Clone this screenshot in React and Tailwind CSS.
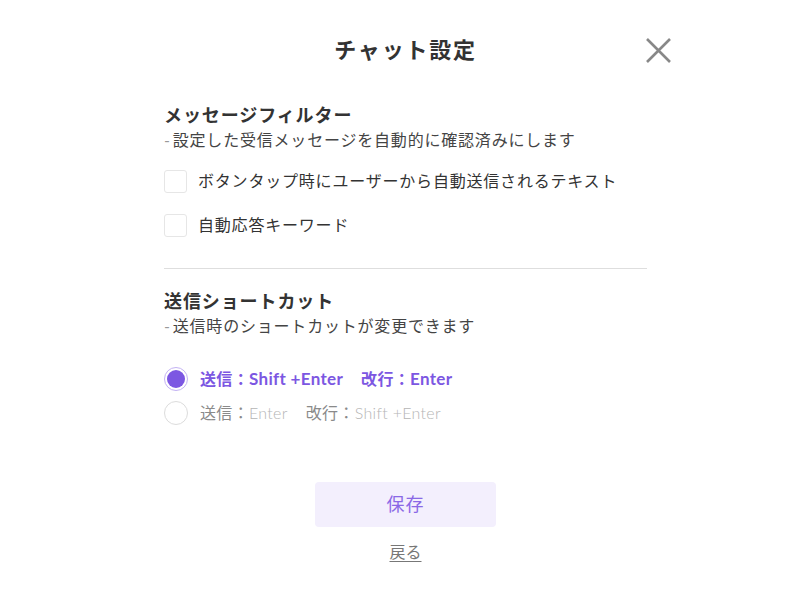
import React from "react";

const font = { fontFamily: "Lato, 'Noto Sans CJK JP', sans-serif" };

export default function App() {
  return (
    <div className="w-[800px] h-[600px] bg-white text-[#333] overflow-hidden" style={font}>
      <div className="relative pt-[35px]">
        <h1 className="ml-[164px] w-[483px] text-center text-[22px] leading-[30px] font-bold tracking-[0.08em] text-[#333]">
          チャット設定
        </h1>
        <button className="absolute left-[645px] top-[37px] w-[27px] h-[27px] text-[#888]">
          <svg viewBox="0 0 27 27" width="27" height="27" fill="none" stroke="currentColor" strokeWidth="2.6" strokeLinecap="butt">
            <path d="M2 2 L25 25 M25 2 L2 25" />
          </svg>
        </button>
      </div>

      <div className="ml-[164px] w-[483px]">
        <h2 className="mt-[37px] text-[18px] leading-[26px] font-bold tracking-[0.05em] text-[#333]">
          メッセージフィルター
        </h2>
        <p className="text-[16px] leading-[24px] tracking-[0.05em] text-[#444]">
          <span className="text-[#999] mr-[2px]">-</span>設定した受信メッセージを自動的に確認済みにします
        </p>

        <div className="mt-[17px] flex flex-col gap-[20px]">
          {["ボタンタップ時にユーザーから自動送信されるテキスト", "自動応答キーワード"].map((t) => (
            <label key={t} className="flex items-center h-[24px]">
              <span className="w-[23px] h-[23px] rounded-[3px] border border-[#e6e6e6] bg-white" />
              <span className="ml-[11px] text-[16px] leading-[24px] tracking-[0.05em] text-[#333]">{t}</span>
            </label>
          ))}
        </div>

        <div className="mt-[31px] h-px bg-[#dedede]" />

        <h2 className="mt-[19px] text-[18px] leading-[26px] font-bold tracking-[0.05em] text-[#333]">
          送信ショートカット
        </h2>
        <p className="text-[16px] leading-[24px] tracking-[0.05em] text-[#444]">
          <span className="text-[#999] mr-[2px]">-</span>送信時のショートカットが変更できます
        </p>

        <div className="mt-[29px] flex flex-col gap-[10px]">
          <label className="flex items-center h-[24px]">
            <span className="w-[24px] h-[24px] rounded-full border border-[#c3b2f3] p-[2px] bg-white">
              <span className="block w-full h-full rounded-full bg-[#7c57e2]" />
            </span>
            <span className="ml-[12px] text-[16px] leading-[24px] font-bold text-[#7c57e2] tracking-[0.02em]">
              送信：<span className="text-[17px]">Shift +Enter</span><span className="inline-block w-[18px]" />改行：<span className="text-[17px]">Enter</span>
            </span>
          </label>
          <label className="flex items-center h-[24px]">
            <span className="w-[24px] h-[24px] rounded-full border border-[#dcdcdc] bg-white" />
            <span className="ml-[12px] text-[16px] leading-[24px] text-[#8a8a8a] tracking-[0.02em]">
              送信：<span className="font-light text-[#b5b5b5]">Enter</span>
              <span className="inline-block w-[18px]" />
              改行：<span className="font-light text-[#b5b5b5]">Shift +Enter</span>
            </span>
          </label>
        </div>

        <div className="mt-[57px] flex flex-col items-center">
          <button className="w-[181px] h-[45px] rounded-[4px] bg-[#f3effd] text-[18px] text-[#8a68e6] tracking-[0.05em]">
            保存
          </button>
          <a className="mt-[13px] text-[16px] leading-[24px] text-[#777] underline underline-offset-[3px]">
            戻る
          </a>
        </div>
      </div>
    </div>
  );
}
